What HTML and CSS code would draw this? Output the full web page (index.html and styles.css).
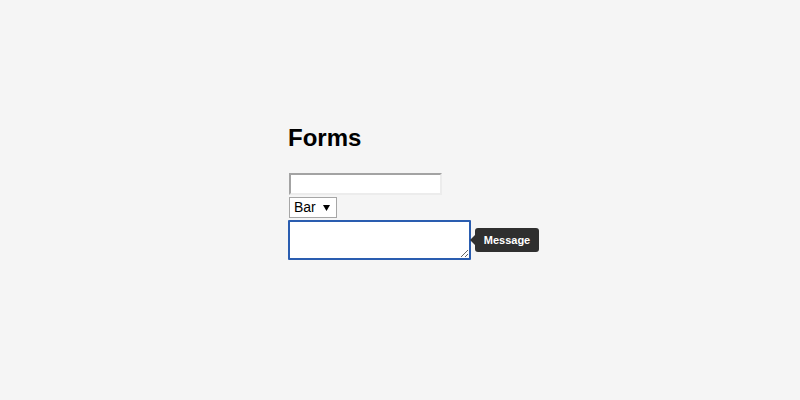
FILE: index.html
```html
<!DOCTYPE html>
<html>
<head>
<meta charset="utf-8">
<link rel="stylesheet" href="styles.css">
</head>
<body>
<main class="page">
  <h1 class="title">Forms</h1>
  <form class="form">
    <input class="text-input" type="text">
    <select class="select">
      <option>Bar</option>
    </select>
    <div class="message-row">
      <textarea class="message"></textarea>
      <span class="tooltip">Message</span>
    </div>
  </form>
</main>
</body>
</html>
```
FILE: styles.css
```css
html, body {
  margin: 0;
  padding: 0;
  background: #f5f5f5;
}
body {
  font-family: "Liberation Sans", Arial, sans-serif;
  color: #000;
}
.page {
  width: 252px;
  margin: 0 auto 0 288px;
  padding-top: 124px;
}
.title {
  margin: 0;
  font-size: 24px;
  font-weight: bold;
  line-height: 28px;
}
.form {
  display: flex;
  flex-direction: column;
  align-items: flex-start;
  margin-top: 21px;
}
.text-input {
  box-sizing: border-box;
  display: block;
  width: 153px;
  height: 22px;
  margin: 0 0 0 1px;
  padding: 0 2px;
  background: #fff;
  border-style: solid;
  border-width: 2px;
  border-color: #a3a3a3 #ececec #ececec #a3a3a3;
  outline: none;
  font: 13px "Liberation Sans", Arial, sans-serif;
}
.select {
  box-sizing: border-box;
  display: block;
  width: 48px;
  height: 21px;
  margin: 2px 0 0 1px;
  padding: 0 0 0 4px;
  -webkit-appearance: none;
  appearance: none;
  background: #fff url("data:image/svg+xml;utf8,<svg xmlns='http://www.w3.org/2000/svg' width='7' height='7'><path d='M0 1 L7 1 L3.5 7 Z' fill='%23000'/></svg>") no-repeat right 6px center;
  border: 1px solid #a6a6a6;
  border-radius: 0;
  font: 14px/19px "Liberation Sans", Arial, sans-serif;
  color: #000;
}
.message-row {
  display: flex;
  align-items: center;
  gap: 4px;
  margin-top: 2px;
}
.message {
  box-sizing: border-box;
  display: block;
  width: 183px;
  height: 40px;
  margin: 0;
  padding: 2px;
  background: #fff;
  border: 2px solid #2a5db0;
  border-radius: 1px;
  outline: none;
  font: 13px "Liberation Sans", Arial, sans-serif;
}
.tooltip {
  position: relative;
  display: block;
  box-sizing: border-box;
  width: 64px;
  height: 24px;
  text-align: center;
  background: #2f2f2f;
  color: #fff;
  border-radius: 3px;
  font: bold 11px/24px "Liberation Sans", Arial, sans-serif;
}
.tooltip::before {
  content: "";
  position: absolute;
  left: -5px;
  top: 7px;
  border-style: solid;
  border-width: 5px 5px 5px 0;
  border-color: transparent #2f2f2f transparent transparent;
}
```
